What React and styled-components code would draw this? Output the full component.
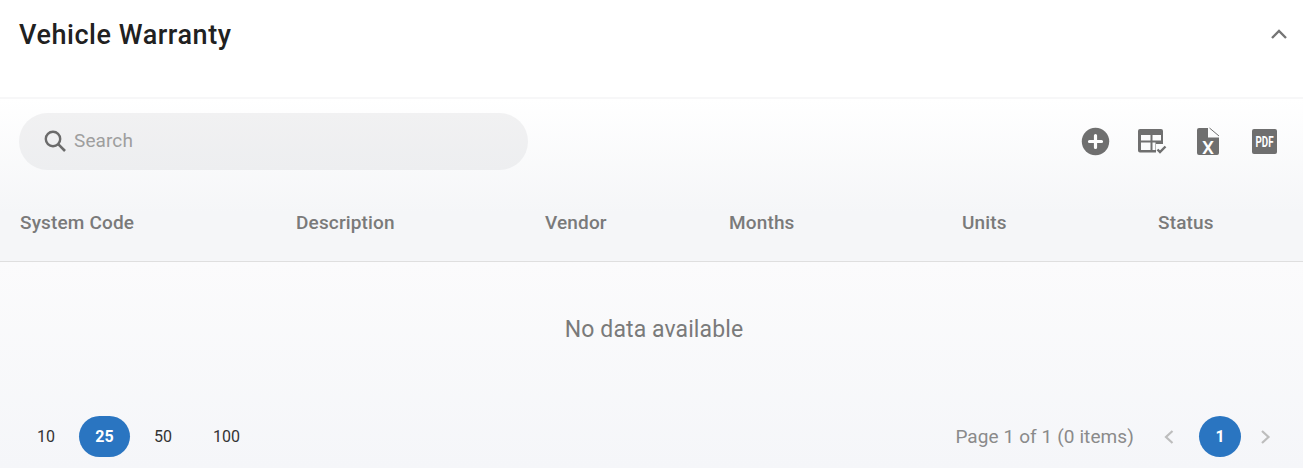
import React from "react";
import styled, { createGlobalStyle } from "styled-components";

const GlobalStyle = createGlobalStyle`
  html, body {
    margin: 0;
    padding: 0;
    background: #fff;
    font-family: Roboto, "Liberation Sans", sans-serif;
  }
`;

const Page = styled.div`
  width: 1303px;
  height: 468px;
  overflow: hidden;
  display: flex;
  flex-direction: column;
`;

const Header = styled.header`
  height: 99px;
  flex: none;
  box-sizing: border-box;
  padding: 20px 14px 0 19px;
  display: flex;
  justify-content: space-between;
  align-items: flex-start;
  border-bottom: 2px solid #f7f7f8;
`;

const Title = styled.h2`
  margin: 0;
  font-size: 27px;
  line-height: 30px;
  font-weight: 500;
  letter-spacing: 0.55px;
  color: #212121;
`;

const Collapse = styled.button`
  border: 0;
  background: none;
  padding: 0;
  margin-top: 7px;
  width: 20px;
  height: 14px;
  display: flex;
  color: #757575;
`;

const TableTop = styled.div`
  height: 163px;
  flex: none;
  box-sizing: border-box;
  background: linear-gradient(180deg, #ffffff 0%, #f5f6f8 70%, #f5f6f8 100%);
  border-bottom: 1px solid #dfdfdf;
  display: flex;
  flex-direction: column;
`;

const Toolbar = styled.div`
  padding: 14px 24px 0 19px;
  height: 57px;
  display: flex;
  justify-content: space-between;
  align-items: center;
`;

const SearchBox = styled.div`
  width: 509px;
  height: 57px;
  border-radius: 29px;
  background: linear-gradient(180deg, #f1f1f2 0%, #edeef0 100%);
  display: flex;
  align-items: center;
  box-sizing: border-box;
  padding-left: 23px;
  padding-bottom: 2px;
  gap: 6px;
`;

const SearchText = styled.span`
  font-size: 19px;
  color: #9e9e9e;
  letter-spacing: 0.1px;
`;

const Tools = styled.div`
  display: flex;
  align-items: center;
  gap: 26px;
`;

const ToolIcon = styled.svg`
  display: block;
  width: 30px;
  height: 30px;
  fill: #6f6f6f;
  overflow: visible;
`;

const IconLabel = styled.text`
  font-family: "Roboto", "Liberation Sans", sans-serif;
  font-weight: ${(p) => p.$weight};
  font-size: ${(p) => p.$size}px;
  fill: #fff;
  text-anchor: middle;
`;

const Columns = styled.div`
  display: grid;
  grid-template-columns: 276px 249px 184px 233px 196px 1fr;
  padding: 41px 0 0 20px;
`;

const ColumnName = styled.div`
  font-size: 19px;
  line-height: 24px;
  font-weight: 500;
  letter-spacing: 0.15px;
  color: #7a7a7a;
`;

const TableBody = styled.div`
  flex: 1;
  display: flex;
  flex-direction: column;
  background: linear-gradient(180deg, #fbfbfc 0%, #f5f6f9 100%);
`;

const Empty = styled.div`
  height: 135px;
  flex: none;
  box-sizing: border-box;
  padding: 53px 0 0 5px;
  text-align: center;
  font-size: 23px;
  line-height: 30px;
  letter-spacing: 0.1px;
  color: #7a7a7a;
`;

const Pager = styled.div`
  display: flex;
  justify-content: space-between;
  align-items: center;
  padding: 19px 32px 0 20px;
`;

const Sizes = styled.div`
  display: flex;
  align-items: center;
  gap: 7px;
`;

const SizeButton = styled.div`
  height: 41px;
  min-width: ${(p) => (p.$active ? "51px" : "auto")};
  padding: 0 ${(p) => (p.$active ? "0" : "17px")};
  border-radius: 21px;
  display: flex;
  align-items: center;
  justify-content: center;
  font-size: 16px;
  font-weight: ${(p) => (p.$active ? 700 : 400)};
  color: ${(p) => (p.$active ? "#fff" : "#333")};
  background: ${(p) => (p.$active ? "#2a75c1" : "transparent")};
`;

const Pages = styled.div`
  display: flex;
  align-items: center;
`;

const PageInfo = styled.span`
  font-size: 19px;
  letter-spacing: 0.1px;
  color: #8a8a8a;
  margin-right: 29px;
`;

const Arrow = styled.svg`
  display: block;
  width: 12px;
  height: 16px;
  fill: none;
  stroke: #bdbdbd;
  stroke-width: 2.2;
`;

const PageNumber = styled.div`
  width: 42px;
  height: 41px;
  margin: 0 18px 0 24px;
  border-radius: 50%;
  background: #2a75c1;
  color: #fff;
  font-size: 16px;
  font-weight: 700;
  display: flex;
  align-items: center;
  justify-content: center;
`;

const columns = ["System Code", "Description", "Vendor", "Months", "Units", "Status"];
const sizes = [10, 25, 50, 100];

export default function App() {
  return (
    <Page>
      <GlobalStyle />
      <Header>
        <Title>Vehicle Warranty</Title>
        <Collapse aria-label="collapse">
          <svg width="20" height="14" viewBox="0 0 20 14" fill="none" stroke="currentColor" strokeWidth="2.4">
            <path d="M3 11 L10 4 L17 11" />
          </svg>
        </Collapse>
      </Header>
      <TableTop>
        <Toolbar>
          <SearchBox>
            <svg width="26" height="26" viewBox="0 0 26 26" fill="none" stroke="#6b6b6b" strokeWidth="2.4">
              <circle cx="11" cy="11" r="7.2" />
              <path d="M16.2 16.2 L23 23" strokeWidth="2.6" />
            </svg>
            <SearchText>Search</SearchText>
          </SearchBox>
          <Tools>
            <ToolIcon viewBox="0 0 30 30">
              <circle cx="14.500" cy="14.500" r="13.700" />
              <path d="M14.500 8.500v12M8.500 14.500h12" stroke="#fff" strokeWidth="3.200" strokeLinecap="round" />
            </ToolIcon>
            <ToolIcon viewBox="0 0 30 30">
              <path
                d="M3 2h21a2 2 0 0 1 2 2v13h-7v8.500H3a2 2 0 0 1-2-2V4a2 2 0 0 1 2-2z M4 8v5.500h9.500V8z M15.500 8v5.500h8.500V8z M4 15.500v7.500h9.500v-7.500z M15.500 15.500v7.500h3v-7.500z"
                fillRule="evenodd"
              />
              <path d="M20.500 22.500 L23 25 L28.500 19.500" fill="none" stroke="#6f6f6f" strokeWidth="2.400" />
            </ToolIcon>
            <ToolIcon viewBox="0 0 30 30">
              <path d="M6 1h9v9.500h11v15.500a2 2 0 0 1-2 2H6a2 2 0 0 1-2-2V3a2 2 0 0 1 2-2z" />
              <path d="M16.500 1l9.500 8" fill="none" stroke="#6f6f6f" strokeWidth="1" />
              <IconLabel x="15" y="27" $size={19} $weight={500}>
                X
              </IconLabel>
            </ToolIcon>
            <ToolIcon viewBox="0 0 30 30">
              <rect x="3" y="2" width="25" height="25" rx="2" />
              <IconLabel x="15.500" y="20" $size={14} $weight={700} textLength="18" lengthAdjust="spacingAndGlyphs">
                PDF
              </IconLabel>
            </ToolIcon>
          </Tools>
        </Toolbar>
        <Columns>
          {columns.map((name) => (
            <ColumnName key={name}>{name}</ColumnName>
          ))}
        </Columns>
      </TableTop>
      <TableBody>
        <Empty>No data available</Empty>
        <Pager>
          <Sizes>
            {sizes.map((size) => (
              <SizeButton key={size} $active={size === 25}>
                {size}
              </SizeButton>
            ))}
          </Sizes>
          <Pages>
            <PageInfo>Page 1 of 1 (0 items)</PageInfo>
            <Arrow viewBox="0 0 12 16">
              <path d="M9.500 2 L3 8 L9.500 14" />
            </Arrow>
            <PageNumber>1</PageNumber>
            <Arrow viewBox="0 0 12 16">
              <path d="M3 2 L9.500 8 L3 14" />
            </Arrow>
          </Pages>
        </Pager>
      </TableBody>
    </Page>
  );
}
